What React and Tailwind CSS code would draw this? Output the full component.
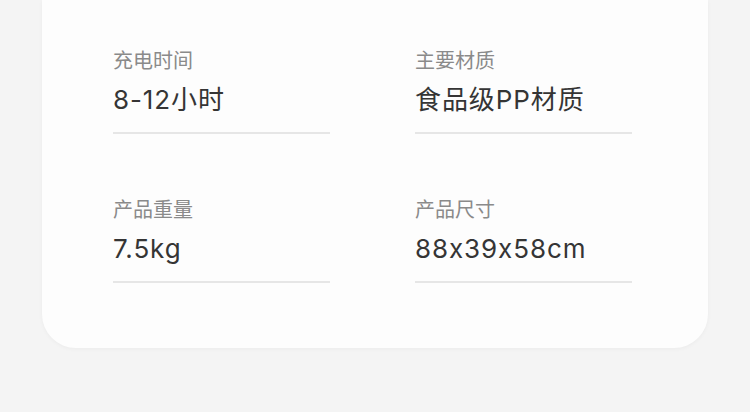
const specs = [
  { label: '充电时间', value: '8-12小时' },
  { label: '主要材质', value: '食品级PP材质' },
  { label: '产品重量', value: '7.5kg' },
  { label: '产品尺寸', value: '88x39x58cm' },
];

const App = () => {
  return (
    <div
      className="w-[750px] h-[412px] bg-[#f4f4f4] overflow-hidden"
      style={{ fontFamily: '"Inter", "Noto Sans CJK SC", sans-serif', fontFeatureSettings: '"calt" 0' }}
    >
      <div className="ml-[42px] w-[666px] bg-[#fdfdfd] rounded-b-[34px] shadow-[0_1px_4px_rgba(0,0,0,0.04)] pt-[49px] pb-[65px] pl-[71px]">
        <div className="grid grid-cols-[217px_217px] gap-x-[85px] gap-y-[64px]">
          {specs.map((s) => (
            <div key={s.label}>
              <div className="text-[20px] leading-[25px] text-[#8a8a8a]">{s.label}</div>
              <div className="mt-[10px] text-[26px] leading-[32px] tracking-[0.035em] text-[#353535]">{s.value}</div>
              <div className="mt-[16px] h-[2px] bg-[#e6e6e6]" />
            </div>
          ))}
        </div>
      </div>
    </div>
  );
};

export default App;
